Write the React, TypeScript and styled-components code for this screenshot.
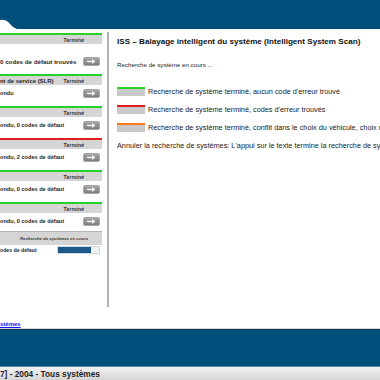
import React from "react";
import styled, { createGlobalStyle } from "styled-components";

const GlobalStyle = createGlobalStyle`
  html, body {
    margin: 0;
    padding: 0;
    width: 380px;
    height: 380px;
    overflow: hidden;
    background: #ffffff;
    font-family: "Liberation Sans", Arial, sans-serif;
  }
`;

const Page = styled.div`
  display: flex;
  flex-direction: column;
  width: 380px;
  height: 380px;
  overflow: hidden;
`;

const Header = styled.header`
  position: relative;
  height: 29px;
  flex-shrink: 0;
  background: #004f7c;
`;

const Notch = styled.svg`
  position: absolute;
  left: 0;
  bottom: 0;
`;

const Main = styled.div`
  flex: 1;
  display: flex;
  padding-top: 4px;
  min-height: 0;
`;

const LeftPanel = styled.div`
  width: 102px;
  flex-shrink: 0;
  display: flex;
  flex-direction: column;
  margin-right: 5px;
`;

const Card = styled.div<{ $line: string; $thin?: boolean }>`
  border-top: ${p => (p.$thin ? "1px" : "2px")} solid ${p => p.$line};
`;

const CardHead = styled.div<{ $center?: boolean; $tall?: boolean }>`
  display: flex;
  align-items: center;
  justify-content: ${p => (p.$center ? "center" : "space-between")};
  height: ${p => (p.$tall ? "13px" : "9px")};
  background: #d5d5d5;
  padding-right: ${p => (p.$center ? "0" : "18px")};
  padding-left: ${p => (p.$center ? "6px" : "0")};
  white-space: nowrap;
  overflow: hidden;
`;

const HeadTitle = styled.span`
  font-size: 5.9px;
  font-weight: bold;
  color: #262626;
`;

const Status = styled.span<{ $small?: boolean }>`
  font-size: ${p => (p.$small ? "4.3px" : "5.4px")};
  font-weight: bold;
  font-style: italic;
  color: #3a3a3a;
`;

const CardBody = styled.div<{ $top?: number; $bottom?: number }>`
  display: flex;
  align-items: center;
  justify-content: space-between;
  height: 10px;
  padding: ${p => p.$top ?? 3}px 2px ${p => p.$bottom ?? 8}px 0;
  white-space: nowrap;
  overflow: hidden;
`;

const BodyText = styled.span<{ $size?: number }>`
  font-size: ${p => p.$size ?? 5.6}px;
  font-weight: bold;
  color: #262626;
`;

const GoButton = styled.button`
  display: flex;
  align-items: center;
  justify-content: center;
  width: 17px;
  height: 9px;
  padding: 0;
  border: 1px solid #a9a9a9;
  border-radius: 2px;
  background: linear-gradient(#a6a6a6, #7c7c7c);
  flex-shrink: 0;
`;

const Progress = styled.div`
  width: 41px;
  height: 6px;
  border: 1px solid #d0d6dc;
  background: #eef2f5;
  flex-shrink: 0;
`;

const ProgressFill = styled.div`
  height: 100%;
  background: #1d5a8a;
`;

const Spacer = styled.div`
  flex: 1;
`;

const PanelLink = styled.a`
  font-size: 6px;
  font-weight: bold;
  color: #1414ff;
  margin-bottom: 2px;
`;

const RightPanel = styled.div`
  flex: 1;
  align-self: flex-start;
  height: 270px;
  border-left: 2px solid #b3b3b3;
  padding: 5px 0 0 8px;
  overflow: hidden;
  white-space: nowrap;
  margin-top: -1px;
`;

const Title = styled.h1`
  margin: 0;
  font-size: 8.1px;
  font-weight: bold;
  line-height: 10px;
  color: #111;
`;

const Line = styled.p<{ $mt: number; $size?: number }>`
  margin: ${p => p.$mt}px 0 0 0;
  font-size: ${p => p.$size ?? 7.3}px;
  line-height: 9px;
  color: #222;
`;

const Legend = styled.div`
  display: flex;
  flex-direction: column;
  gap: 9px;
  margin-top: 18px;
`;

const LegendRow = styled.div`
  display: flex;
  align-items: center;
  gap: 3px;
  height: 9px;
`;

const Swatch = styled.span<{ $line: string }>`
  width: 28px;
  height: 7px;
  border-top: 2px solid ${p => p.$line};
  background: #c9c9c9;
  flex-shrink: 0;
`;

const LegendText = styled.span`
  font-size: 7.3px;
  color: #222;
`;

const BlueBar = styled.div`
  height: 36px;
  flex-shrink: 0;
  background: #004f7c;
  border-top: 1px solid #0f3450;
  box-shadow: 0 -1px 0 #d6d6d6;
  border-bottom: 1px solid #5d86a3;
`;

const StatusBar = styled.div`
  height: 13px;
  flex-shrink: 0;
  display: flex;
  align-items: center;
  background: linear-gradient(#f2f2f2, #d6d6d6);
  font-size: 8.3px;
  font-weight: bold;
  color: #1e1e1e;
  white-space: nowrap;
  overflow: hidden;
`;

const Arrow = () => (
  <svg width="9" height="5" viewBox="0 0 9 5">
    <path d="M0 2.5h6" stroke="#f4f4f4" strokeWidth="1.4" />
    <path d="M5 0l3.5 2.5L5 5z" fill="#f4f4f4" />
  </svg>
);

const GREEN = "#2bd12b";
const RED = "#e11d1d";

const results = [
  { line: GREEN, head: "", text: "0 codes de défaut trouvés", top: 12, size: 6.2 },
  { line: GREEN, head: "nt de service (SLR)", text: "ondu" },
  { line: GREEN, head: "", text: "ondu, 0 codes de défaut" },
  { line: RED, head: "", text: "ondu, 2 codes de défaut" },
  { line: GREEN, head: "", text: "ondu, 0 codes de défaut" },
  { line: GREEN, head: "", text: "ondu, 0 codes de défaut", bottom: 5 },
];

const legend = [
  { line: GREEN, text: "Recherche de système terminé, aucun code d'erreur trouvé" },
  { line: RED, text: "Recherche de système terminé, codes d'erreur trouvés" },
  {
    line: "#ff7a1a",
    text: "Recherche de système terminé, conflit dans le choix du véhicule, choix manuel nécessaire",
  },
];

const App: React.FC = () => {
  return (
    <Page>
      <GlobalStyle />
      <Header>
        <Notch width="17" height="10" viewBox="0 0 17 10">
          <path d="M0 1Q6 0 10 5Q13 9 17 10L0 10Z" fill="#ffffff" />
        </Notch>
      </Header>
      <Main>
        <LeftPanel>
          {results.map((r, i) => (
            <Card key={i} $line={r.line}>
              <CardHead>
                <HeadTitle>{r.head}</HeadTitle>
                <Status>Terminé</Status>
              </CardHead>
              <CardBody $top={r.top} $bottom={r.bottom}>
                <BodyText $size={r.size}>{r.text}</BodyText>
                <GoButton>
                  <Arrow />
                </GoButton>
              </CardBody>
            </Card>
          ))}
          <Card $line="#b5b5b5" $thin>
            <CardHead $center $tall>
              <Status $small>Recherche de systèmes en cours</Status>
            </CardHead>
            <CardBody $top={0}>
              <BodyText $size={5.2}>odes de défaut</BodyText>
              <Progress>
                <ProgressFill style={{ width: "80%" }} />
              </Progress>
            </CardBody>
          </Card>
          <Spacer />
          <PanelLink href="#">stèmes</PanelLink>
        </LeftPanel>
        <RightPanel>
          <Title>ISS – Balayage intelligent du système (Intelligent System Scan)</Title>
          <Line $mt={13} $size={6.2}>Recherche de système en cours ...</Line>
          <Legend>
            {legend.map((l, i) => (
              <LegendRow key={i}>
                <Swatch $line={l.line} />
                <LegendText>{l.text}</LegendText>
              </LegendRow>
            ))}
          </Legend>
          <Line $mt={9}>
            Annuler la recherche de systèmes: L'appui sur le texte termine la recherche de systèmes.
          </Line>
        </RightPanel>
      </Main>
      <BlueBar />
      <StatusBar>7] - 2004 - Tous systèmes</StatusBar>
    </Page>
  );
};

export default App;
